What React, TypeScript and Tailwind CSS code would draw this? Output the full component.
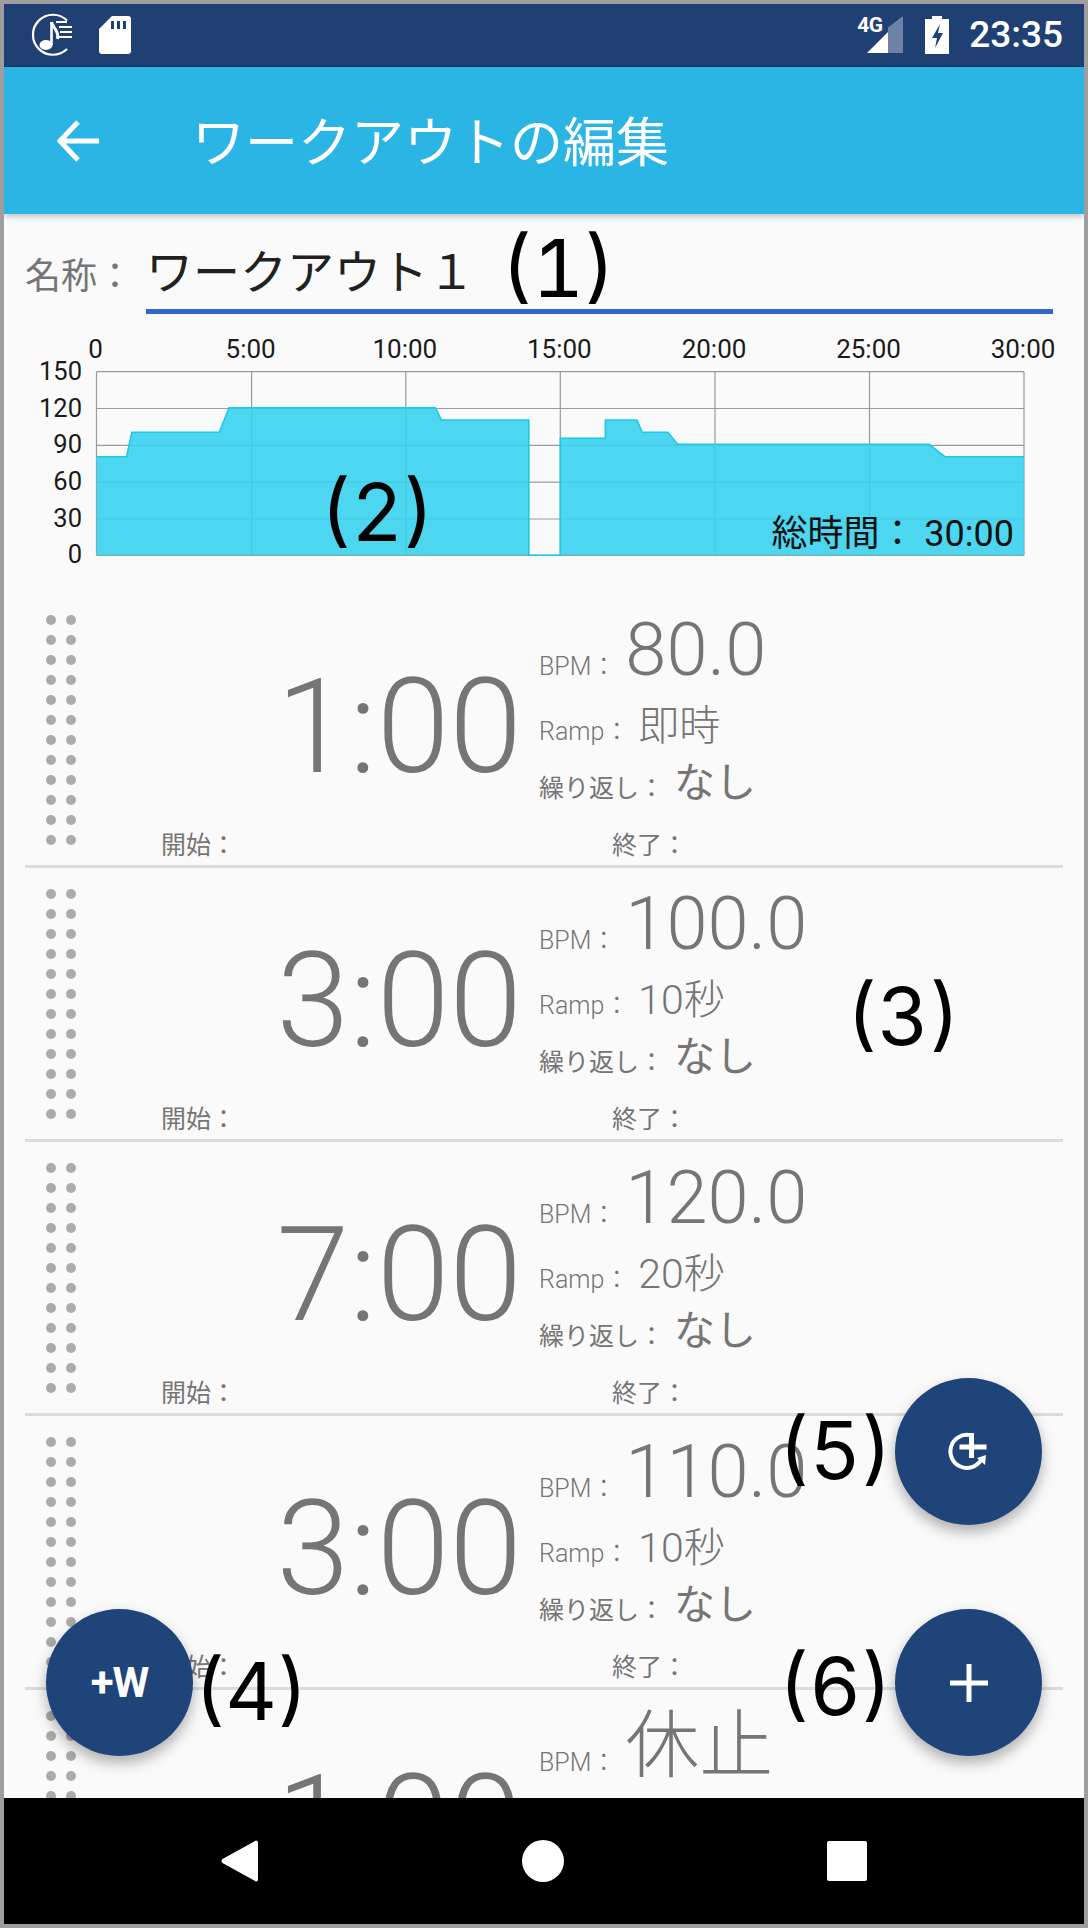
const rows = [
  { time: '1:00', bpm: '80.0', ramp: '即時', repeat: 'なし' },
  { time: '3:00', bpm: '100.0', ramp: '10秒', repeat: 'なし' },
  { time: '7:00', bpm: '120.0', ramp: '20秒', repeat: 'なし' },
  { time: '3:00', bpm: '110.0', ramp: '10秒', repeat: 'なし' },
  { time: '1:00', bpm: '休止', ramp: '即時', repeat: 'なし' },
];

const xTicks = [
  { x: 96.5, label: '0' },
  { x: 251.6, label: '5:00' },
  { x: 405.8, label: '10:00' },
  { x: 560.3, label: '15:00' },
  { x: 715, label: '20:00' },
  { x: 869.5, label: '25:00' },
  { x: 1024, label: '30:00' },
];

const yTicks = [
  { y: 371.7, label: '150' },
  { y: 408.5, label: '120' },
  { y: 445.3, label: '90' },
  { y: 482.2, label: '60' },
  { y: 519, label: '30' },
  { y: 555.3, label: '0' },
];

// top edge of each block of the tempo chart
const topA = '96.5,456.7 126.6,456.7 131.9,432.3 219.3,432.3 229,407.7 435.5,407.7 441.4,420 528.8,420';
const topB = '560.3,438.3 605.4,438.3 605.4,420 637,420 642.2,432.3 667.9,432.3 677.6,444.3 929.2,444.3 944.8,456.7 1024,456.7';

const StatusBar = () => (
  <div className="h-[63px] bg-[#204074] flex items-center shrink-0 border-b border-[#1b3661]">
    <svg className="ml-[26px] w-[44px] h-[44px]" viewBox="0 0 44 44" fill="none" stroke="white">
      <path d="M37 36A20 20 0 1 1 37 7.5" strokeWidth="2.2" />
      <path d="M21.5 9v23" strokeWidth="2.6" />
      <ellipse cx="16" cy="32" rx="6.5" ry="5" fill="white" stroke="none" />
      <path d="M21.5 9c1 6 8 8 6 17" strokeWidth="3" />
      <path d="M26 9h11M29 14h13M30 19h12M28 24h14" strokeWidth="2" />
    </svg>
    <svg className="ml-[25px] w-[32px] h-[38px]" viewBox="0 0 32 38" fill="white">
      <path d="M13 0h16a3 3 0 0 1 3 3v32a3 3 0 0 1-3 3H3a3 3 0 0 1-3-3V13z" />
      <path d="M12 5h3v8h-3zM18 5h3v8h-3zM24 5h3v8h-3z" fill="#204074" />
    </svg>
    <div className="ml-auto flex items-center">
      <div className="relative w-[48px] h-[38px]">
        <span className="absolute left-0 top-[-3px] text-[21px] leading-[24px] font-bold text-white tracking-[-0.5px]">4G</span>
        <svg className="absolute left-0 top-0 w-[48px] h-[38px]" viewBox="0 0 48 38">
          <path d="M31 11.5L46 0v37H31z" fill="white" fillOpacity="0.35" />
          <path d="M10 37L31 16v21z" fill="white" />
        </svg>
      </div>
      <svg className="ml-[20px] w-[24px] h-[38px]" viewBox="0 0 24 38">
        <path d="M7 0h10v3h7v35H0V3h7z" fill="white" />
        <path d="M15 8L7 22h5l-2 10 8-15h-5z" fill="#204074" />
      </svg>
      <span className="ml-[20px] mr-[21px] text-[37px] leading-[44px] font-medium text-white">23:35</span>
    </div>
  </div>
);

const AppBar = () => (
  <div className="relative z-10 h-[147px] bg-[#2ab5e5] flex items-center shrink-0 shadow-[0_2px_6px_rgba(0,0,0,0.25)]">
    <svg className="ml-[53px] w-[42px] h-[42px]" viewBox="0 0 42 42" fill="none" stroke="white" strokeWidth="5">
      <path d="M42 21H4M21 2L3 21l18 19" />
    </svg>
    <h1 className="ml-[93px] mt-[6px] text-[53px] leading-[60px] text-white font-normal">ワークアウトの編集</h1>
  </div>
);

const Chart = () => (
  <svg className="block mt-[6px] w-[1080px] h-[274px] shrink-0" viewBox="4 320 1080 274">
    {yTicks.map((t) => (
      <line key={t.label} x1="96.5" x2="1024" y1={t.y} y2={t.y} stroke="#9a9a9a" strokeWidth="1.2" />
    ))}
    {xTicks.map((t) => (
      <line key={t.label} x1={t.x} x2={t.x} y1="371.7" y2="555.3" stroke="#9a9a9a" strokeWidth="1.2" />
    ))}
    <polygon points={`96.5,555.3 ${topA} 528.8,555.3`} fill="#33d0ee" fillOpacity="0.88" />
    <polygon points={`560.3,555.3 ${topB} 1024,555.3`} fill="#33d0ee" fillOpacity="0.88" />
    <polyline
      points={`${topA} 528.8,555.3 560.3,555.3 ${topB}`}
      fill="none"
      stroke="#1ec8e8"
      strokeWidth="1.6"
    />
    {xTicks.map((t) => (
      <text key={t.label} x={t.x - 1} y="358" textAnchor="middle" fontSize="26" fill="#1a1a1a">
        {t.label}
      </text>
    ))}
    {yTicks.map((t) => (
      <text key={t.label} x="82" y={t.y + 8} textAnchor="end" fontSize="25.5" fill="#1a1a1a">
        {t.label}
      </text>
    ))}
    <text x="1014" y="546" textAnchor="end" fontSize="36" fill="#111111">
      総時間： 30:00
    </text>
  </svg>
);

const StepRow = ({ time, bpm, ramp, repeat }: { time: string; bpm: string; ramp: string; repeat: string }) => (
  <div className="h-[274px] shrink-0 ml-[21px] mr-[21px] border-b-[3px] border-[#dcdcdc] flex text-[#757575]">
    <div className="ml-[21px] mt-[21px] w-[30px] h-fit grid grid-cols-2 gap-x-[10px] gap-y-[10.3px]">
      {Array.from({ length: 24 }).map((_, i) => (
        <span key={i} className="w-[9.7px] h-[9.7px] rounded-full bg-[#ababab]" />
      ))}
    </div>
    <div className="flex-1 flex flex-col">
      <div className="h-[237px] flex">
        <div className="w-[446px] mt-[67px] text-right text-[131px] leading-[133px] font-light">{time}</div>
        <div className="ml-[17px] pt-[20px] flex flex-col">
          <div className="h-[72px] flex items-baseline gap-[9px]">
            <span className="text-[25px] font-light">BPM：</span>
            <span className="text-[74px] leading-[72px] font-light">{bpm}</span>
          </div>
          <div className="mt-[20px] h-[40px] flex items-baseline gap-[9px]">
            <span className="text-[25px] font-light">Ramp：</span>
            <span className="text-[41px] leading-[40px] font-light">{ramp}</span>
          </div>
          <div className="mt-[17px] h-[40px] flex items-baseline gap-[10px]">
            <span className="text-[25px]">繰り返し：</span>
            <span className="text-[41px] leading-[40px]">{repeat}</span>
          </div>
        </div>
      </div>
      <div className="h-[30px] flex text-[25px] leading-[30px]">
        <span className="ml-[85px] w-[451px]">開始：</span>
        <span>終了：</span>
      </div>
    </div>
  </div>
);

const Fab = ({ className, children }: { className: string; children: React.ReactNode }) => (
  <div
    className={`absolute z-20 w-[147px] h-[147px] rounded-full bg-[#1f447a] flex items-center justify-center text-white shadow-[0_7px_14px_rgba(0,0,0,0.3)] ${className}`}
  >
    {children}
  </div>
);

const Note = ({ className, children }: { className: string; children: string }) => (
  <span
    className={`absolute z-30 text-black text-[80px] leading-[76px] font-normal tabular-nums font-[Inter,sans-serif] ${className}`}
  >
    {children}
  </span>
);

export default function App() {
  return (
    <div className="w-[1088px] h-[1928px] p-[4px] bg-[#9e9e9e] font-[Roboto,'Noto_Sans_CJK_JP',sans-serif]">
      <div className="relative w-full h-full flex flex-col overflow-hidden bg-[#fafafa]">
        <StatusBar />
        <AppBar />
        <main className="flex-1 min-h-0 overflow-hidden flex flex-col">
          <div className="h-[100px] shrink-0 flex items-end pl-[21px]">
            <span className="mb-[15px] w-[121px] text-[36px] leading-[44px] text-[#757575]">名称：</span>
            <div className="w-[907px] h-[100px] flex items-end border-b-[5px] border-[#3366cc]">
              <span className="mb-[9px] text-[47px] leading-[54px] text-[#212121]">ワークアウト１</span>
            </div>
          </div>
          <Chart />
          {rows.map((row, i) => (
            <StepRow key={i} {...row} />
          ))}
        </main>
        <nav className="h-[126px] shrink-0 bg-black flex items-center justify-between px-[217px]">
          <svg className="w-[37px] h-[42px]" viewBox="0 0 37 42" fill="white">
            <path d="M35 0.5a2 2 0 0 1 2 2v37a2 2 0 0 1-2 2L1.5 23a2.5 2.5 0 0 1 0-4z" />
          </svg>
          <span className="w-[42px] h-[42px] rounded-full bg-white" />
          <span className="w-[40px] h-[40px] rounded-[2px] bg-white" />
        </nav>

        <Fab className="left-[42px] top-[1605px]">
          <span className="text-[42px] leading-none font-bold tracking-[-1px]">+W</span>
        </Fab>
        <Fab className="left-[891px] top-[1374px]">
          <svg className="w-[46px] h-[46px]" viewBox="1 0 46 46" fill="none" stroke="white">
            <path d="M24 6A16.5 16.5 0 1 0 36 31" strokeWidth="4" />
            <path d="M14.5 18h27M26.5 4v25" strokeWidth="5" />
            <path d="M32 29l9-3-1 10z" fill="white" stroke="none" />
          </svg>
        </Fab>
        <Fab className="left-[891px] top-[1605px]">
          <svg className="w-[38px] h-[38px]" viewBox="0 0 38 38" stroke="white" strokeWidth="5">
            <path d="M0 19h38M19 0v38" />
          </svg>
        </Fab>

        <Note className="left-[497px] top-[226px]">(1)</Note>
        <Note className="left-[316px] top-[470px]">(2)</Note>
        <Note className="left-[842px] top-[974px]">(3)</Note>
        <Note className="left-[190px] top-[1649px]">(4)</Note>
        <Note className="left-[774px] top-[1408px]">(5)</Note>
        <Note className="left-[774px] top-[1644px]">(6)</Note>
      </div>
    </div>
  );
}
